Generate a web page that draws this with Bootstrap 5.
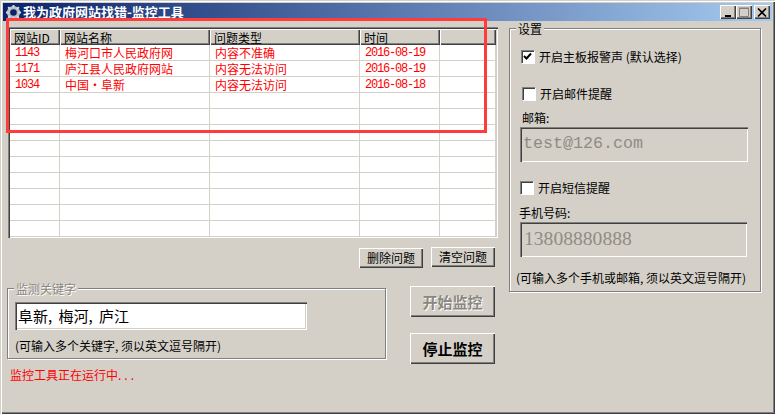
<!DOCTYPE html>
<html lang="zh"><head><meta charset="utf-8"><title>监控工具</title>
<link href="https://cdn.jsdelivr.net/npm/bootstrap@5.3.0/dist/css/bootstrap.min.css" rel="stylesheet">
<style>
html,body{margin:0;background:#d4d0c8}
body{font:12px/12px "Noto Sans CJK SC",sans-serif;color:#000;overflow:hidden}
.win{width:775px;height:414px;background:#d4d0c8;position:relative;padding:3px;box-shadow:inset 1px 1px 0 #d4d0c8,inset 2px 2px 0 #fff,inset -1px -1px 0 #404040,inset -2px -2px 0 #808080;overflow:hidden}
.ttl{height:18px;background:linear-gradient(90deg,#0a246a,#a6caf0);color:#fff;font-weight:700;font-size:13px;line-height:18px;padding-left:3px;gap:2px}
.wbtn{width:16px;height:14px;background:#d4d0c8;box-shadow:inset 1px 1px 0 #fff,inset -1px -1px 0 #404040,inset -2px -2px 0 #808080}
.wclose{margin-left:2px}
.wbtns{margin-left:auto;margin-right:2px}
.bodyrow{padding:6px 0 0 5px}
.leftcol{width:490px}
.gridbox{width:490px;height:211px;background:#fff;overflow:hidden;box-shadow:inset 1px 1px 0 #808080,inset 2px 2px 0 #404040,inset -1px -1px 0 #fff,inset -2px -2px 0 #d4d0c8;padding:2px}
.grid{table-layout:fixed;border-collapse:separate;border-spacing:0;width:486px}
.grid th{height:16px;background:#d4d0c8;font-weight:400;padding:0 0 0 4px;text-align:left;box-shadow:inset 1px 1px 0 #fff,inset -1px -1px 0 #404040,inset -2px -2px 0 #808080;line-height:15px}
.grid td{height:16px;color:#f00;padding:0 0 0 5px;border-right:1px solid #d4d0c8;border-bottom:1px solid #d4d0c8;white-space:nowrap;line-height:15px}
.grid td.num{font-family:"Liberation Mono",monospace;font-size:12px;letter-spacing:-1.2px;padding-top:1px;line-height:14px}
.bv{background:#d4d0c8;border:0;padding:0;color:#000;box-shadow:inset 1px 1px 0 #fff,inset -1px -1px 0 #404040,inset -2px -2px 0 #808080;font-size:12px}
.b-sm{width:64px;height:20px}
.b-up{margin-top:-1px}
.delrow{padding:10px 3px 0 351px;gap:8px}
.b-lg{width:85px;height:31px;font-size:15px;font-weight:700}
.off{color:#8a8780;text-shadow:1px 1px 0 #fff}
.grp{position:relative;border:1px solid #808080;box-shadow:1px 1px 0 #fff,inset 1px 1px 0 #fff}
.lgd{position:absolute;left:6px;top:-6px;background:#d4d0c8;padding:0 2px}
.kw{width:379px;height:71px;padding:13px 0 0 7px;margin-left:-1px}
.lowrow{padding-top:20px}
.kwin{width:292px;height:28px;background:#fff;box-shadow:inset 1px 1px 0 #808080,inset 2px 2px 0 #404040,inset -1px -1px 0 #fff,inset -2px -2px 0 #d4d0c8;font-size:15px;line-height:28px;padding-left:3px;word-spacing:3px}
.kwhint{margin-top:10px}
.runs{width:85px;margin-left:24px;margin-top:-2px;gap:16px}
.status{color:#f00;padding:5px 0 0 2px}
.dots{letter-spacing:3px}
.setg{width:252px;height:264px;margin:1px 0 0 11px;padding:0 0 0 12px}
.chk{width:13px;height:13px;background:#fff;box-shadow:inset 1px 1px 0 #808080,inset 2px 2px 0 #404040,1px 1px 0 #fff;flex:none;display:flex;align-items:center;justify-content:center}
.cl{gap:5px;height:13px}
.ro{height:35px;background:#d4d0c8;box-shadow:inset 1px 1px 0 #808080,inset 2px 2px 0 #404040,inset -1px 0 0 #fff,inset 0 -1px 0 #fff;color:#8f8b84;margin-top:3px;margin-left:-2px}
.ro-mail{width:228px;font:16.67px/33px "Liberation Mono",monospace;padding-left:3px}
.ro-tel{width:227px;font:19.6px/33px "Liberation Serif",serif;padding-left:4px}
.c1{margin:21px 0 0 -1px}
.c2{margin-top:24px}
.c3{margin:19px 0 0 -2px}
.l1{margin-top:12px}
.l2{margin:13px 0 0 -3px}
.sethint{margin:15px 0 0 -6px}
</style></head><body>
<div class="win d-flex flex-column">
 <div class="ttl d-flex align-items-center">
  <svg width="15" height="15" viewBox="0 0 16 16"><circle cx="8" cy="8" r="7" fill="#b8bcc4"/><g stroke="#d8dce0" stroke-width="2"><path d="M8 0v3M8 13v3M0 8h3M13 8h3M2.300 2.300l2 2M11.700 11.700l2 2M2.300 13.700l2-2M11.700 4.300l2-2"/></g><circle cx="8" cy="8" r="3.500" fill="#0a246a"/></svg>
  <span>我为政府网站找错-监控工具</span>
  <div class="wbtns d-flex">
   <div class="wbtn d-flex align-items-end justify-content-center"><svg width="8" height="11" viewBox="0 0 8 11"><path d="M1 7h6v2H1z" fill="#000"/></svg></div>
   <div class="wbtn d-flex align-items-center justify-content-center"><svg width="10" height="10" viewBox="0 0 10 10"><path d="M.5 1.500h9v8h-9z" fill="none" stroke="#808080"/><path d="M0 1h10" stroke="#808080"/></svg></div>
   <div class="wbtn wclose d-flex align-items-center justify-content-center"><svg width="10" height="9" viewBox="0 0 10 9"><path d="M1 .500l8 8M9 .500l-8 8" stroke="#000" stroke-width="1.600"/></svg></div>
  </div>
 </div>
 <div class="bodyrow d-flex">
  <div class="leftcol">
   <div class="gridbox">
    <table class="grid">
     <colgroup><col style="width:50px"><col style="width:150px"><col style="width:150px"><col style="width:80px"><col></colgroup>
     <thead><tr><th>网站ID</th><th>网站名称</th><th>问题类型</th><th>时间</th><th></th></tr></thead>
     <tbody>
      <tr><td class="num">1143</td><td>梅河口市人民政府网</td><td>内容不准确</td><td class="num">2016-08-19</td><td></td></tr>
      <tr><td class="num">1171</td><td>庐江县人民政府网站</td><td>内容无法访问</td><td class="num">2016-08-19</td><td></td></tr>
      <tr><td class="num">1034</td><td>中国・阜新</td><td>内容无法访问</td><td class="num">2016-08-18</td><td></td></tr>
      <tr><td></td><td></td><td></td><td></td><td></td></tr>
      <tr><td></td><td></td><td></td><td></td><td></td></tr>
      <tr><td></td><td></td><td></td><td></td><td></td></tr>
      <tr><td></td><td></td><td></td><td></td><td></td></tr>
      <tr><td></td><td></td><td></td><td></td><td></td></tr>
      <tr><td></td><td></td><td></td><td></td><td></td></tr>
      <tr><td></td><td></td><td></td><td></td><td></td></tr>
      <tr><td></td><td></td><td></td><td></td><td></td></tr>
      <tr><td></td><td></td><td></td><td></td><td></td></tr>
     </tbody>
    </table>
   </div>
   <div class="delrow d-flex align-items-start">
    <button class="bv b-sm" type="button">删除问题</button>
    <button class="bv b-sm b-up" type="button">清空问题</button>
   </div>
   <div class="lowrow d-flex">
    <div class="grp kw">
     <span class="lgd off">监测关键字</span>
     <div class="kwin">阜新, 梅河, 庐江</div>
     <div class="kwhint">(可输入多个关键字, 须以英文逗号隔开)</div>
    </div>
    <div class="runs d-flex flex-column">
     <button class="bv b-lg off" type="button">开始监控</button>
     <button class="bv b-lg" type="button">停止监控</button>
    </div>
   </div>
   <div class="status">监控工具正在运行中<span class="dots">...</span></div>
  </div>
  <div class="grp setg">
   <span class="lgd">设置</span>
   <div class="cl c1 d-flex align-items-center"><span class="chk"><svg width="9" height="9" viewBox="0 0 9 9"><path d="M1 4l2.500 2.500L8 1.500" fill="none" stroke="#000" stroke-width="2"/></svg></span><span>开启主板报警声 (默认选择)</span></div>
   <div class="cl c2 d-flex align-items-center"><span class="chk"></span><span>开启邮件提醒</span></div>
   <div class="l1">邮箱:</div>
   <div class="ro ro-mail">test@126.com</div>
   <div class="cl c3 d-flex align-items-center"><span class="chk"></span><span>开启短信提醒</span></div>
   <div class="l2">手机号码:</div>
   <div class="ro ro-tel">13808880888</div>
   <div class="sethint">(可输入多个手机或邮箱, 须以英文逗号隔开)</div>
  </div>
 </div>
 <svg class="position-absolute top-0 start-0" width="775" height="414" viewBox="0 0 775 414"><rect x="7.500" y="19.500" width="478" height="112" fill="none" stroke="#ff3b3b" stroke-width="3"/></svg>
</div>
</body></html>
